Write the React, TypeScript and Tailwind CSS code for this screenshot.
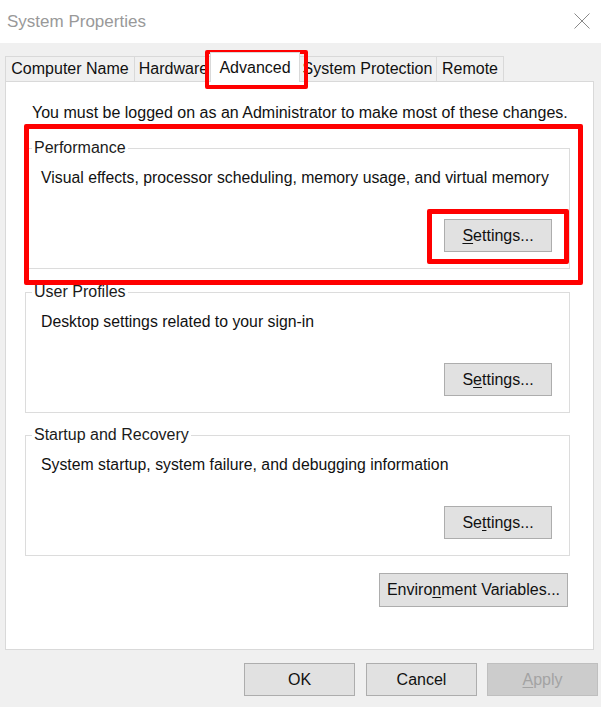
import React from "react";

type Tab = { label: string; width: string; active?: boolean };

const tabs: Tab[] = [
  { label: "Computer Name", width: "w-[130px]" },
  { label: "Hardware", width: "w-[79px]" },
  { label: "Advanced", width: "w-[86px]", active: true },
  { label: "System Protection", width: "w-[139px]" },
  { label: "Remote", width: "w-[68px]" },
];

// Win32 style push button, the mnemonic letter is underlined
const WinButton = ({
  before,
  mnemonic,
  after,
  className = "",
  disabled = false,
}: {
  before: string;
  mnemonic: string;
  after: string;
  className?: string;
  disabled?: boolean;
}) => (
  <button
    className={`h-[33px] border text-[16px] leading-none flex items-center justify-center ${
      disabled
        ? "bg-[#cccccc] border-[#bfbfbf] text-[#a3a3a3]"
        : "bg-[#e1e1e1] border-[#adadad] text-[#111]"
    } ${className}`}
  >
    <span>
      {before}
      <u className="underline-offset-2">{mnemonic}</u>
      {after}
    </span>
  </button>
);

// Group box drawn with fieldset + legend so the label cuts the border
const GroupBox = ({
  title,
  text,
  button,
  className = "",
}: {
  title: string;
  text: string;
  button: React.ReactNode;
  className?: string;
}) => (
  <fieldset className={`ml-[19px] w-[545px] border border-[#dcdcdc] ${className}`}>
    <legend className="ml-[6px] px-[2px] text-[16px] leading-[18px] text-[#1b1b1b]">{title}</legend>
    <p className="pl-[15px] mt-[12px] text-[15.8px] leading-[18px] text-[#111]">{text}</p>
    <div className="flex justify-end mt-[32px] mb-[16px] pr-[17px]">{button}</div>
  </fieldset>
);

export default function App() {
  return (
    <div className="relative w-[601px] h-[707px] overflow-hidden bg-[#f0f0f0] font-['Liberation_Sans',Arial,sans-serif]">
      {/* Title bar */}
      <div className="h-[43px] bg-white flex items-center justify-between pl-[7px] pr-[11px]">
        <span className="text-[17px] text-[#999999]">System Properties</span>
        <svg width="16" height="16" viewBox="0 0 16 16" className="mb-[1px]">
          <path d="M0.5 0.5 L15.5 15.5 M15.5 0.5 L0.5 15.5" stroke="#8a8a8a" strokeWidth="1" fill="none" />
        </svg>
      </div>

      {/* Tabs */}
      <div className="mt-[9px] pl-[5px] flex items-end h-[29px]">
        {tabs.map((t) =>
          t.active ? (
            <div
              key={t.label}
              className="relative z-10 -mx-[2px] w-[90px] h-[30px] -mb-px bg-white border border-b-0 border-[#d9d9d9] flex items-start justify-center pt-[3px] text-[16px] text-[#111]"
            >
              {t.label}
            </div>
          ) : (
            <div
              key={t.label}
              className={`${t.width} h-[25px] -mr-px bg-[#f0f0f0] border border-b-0 border-[#d9d9d9] flex items-center justify-center text-[16px] text-[#111]`}
            >
              {t.label}
            </div>
          )
        )}
      </div>

      {/* Tab page */}
      <div className="ml-[5px] w-[589px] h-[569px] bg-white border border-[#d9d9d9] flex flex-col">
        <p className="mt-[22px] pl-[26px] text-[16px] leading-[18px] text-[#111]">
          You must be logged on as an Administrator to make most of these changes.
        </p>

        <GroupBox
          className="mt-[17px]"
          title="Performance"
          text="Visual effects, processor scheduling, memory usage, and virtual memory"
          button={<WinButton before="" mnemonic="S" after="ettings..." className="w-[108px]" />}
        />
        <GroupBox
          className="mt-[14px]"
          title="User Profiles"
          text="Desktop settings related to your sign-in"
          button={<WinButton before="S" mnemonic="e" after="ttings..." className="w-[108px]" />}
        />
        <GroupBox
          className="mt-[13px]"
          title="Startup and Recovery"
          text="System startup, system failure, and debugging information"
          button={<WinButton before="Se" mnemonic="t" after="tings..." className="w-[108px]" />}
        />

        <div className="flex justify-end pr-[25px] mt-[17px]">
          <WinButton before="Enviro" mnemonic="n" after="ment Variables..." className="w-[189px] h-[34px]" />
        </div>
      </div>

      {/* Dialog buttons */}
      <div className="flex justify-end gap-[10px] pr-[3px] mt-[13px]">
        <WinButton before="" mnemonic="" after="OK" className="w-[111px]" />
        <WinButton before="" mnemonic="" after="Cancel" className="w-[111px] ml-px" />
        <WinButton before="" mnemonic="A" after="pply" className="w-[111px]" disabled />
      </div>

      {/* Red annotation boxes */}
      <div className="absolute left-[205px] top-[50px] w-[103px] h-[39px] border-[4px] border-[#ff0000] rounded-[2px]" />
      <div className="absolute left-[24px] top-[124px] w-[559px] h-[161px] border-[5px] border-[#ff0000] rounded-[2px]" />
      <div className="absolute left-[427px] top-[209px] w-[142px] h-[55px] border-[5px] border-[#ff0000] rounded-[2px]" />
    </div>
  );
}
